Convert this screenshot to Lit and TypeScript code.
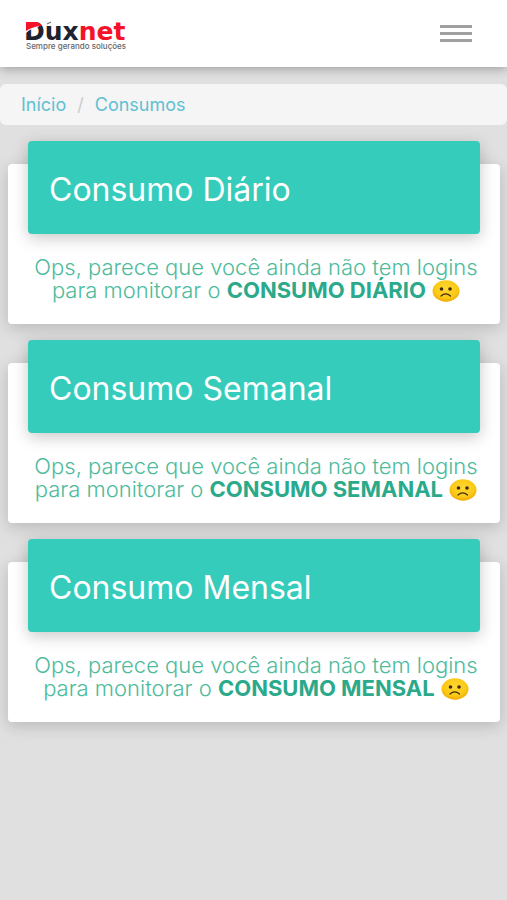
import { LitElement, html, css, svg } from "lit";
import { customElement, property } from "lit/decorators.js";

const sadFace = svg`
  <radialGradient id="face" cx="50%" cy="40%" r="60%">
    <stop offset="0" stop-color="#fdd835" />
    <stop offset="0.7" stop-color="#fbc915" />
    <stop offset="1" stop-color="#f0a800" />
  </radialGradient>
  <ellipse cx="14" cy="11" rx="13.500" ry="10.700" fill="url(#face)" />
  <ellipse cx="9.500" cy="9" rx="1.800" ry="1.700" fill="#422b0d" />
  <ellipse cx="18" cy="9" rx="1.800" ry="1.700" fill="#422b0d" />
  <path d="M9 16 Q13.700 11.800 18.500 16" fill="none" stroke="#422b0d" stroke-width="1.200" stroke-linecap="round" />`;

@customElement("usage-card")
export class UsageCard extends LitElement {
  @property() period = "";

  static styles = css`
    :host { display: block; }
    .card { position: relative; z-index: 0; padding: 0 20px; }
    .card::before {
      content: "";
      position: absolute;
      z-index: -1;
      inset: 23px 0 0;
      background: #fff;
      border-radius: 4px;
      box-shadow: 0 4px 16px rgba(0, 0, 0, 0.18);
    }
    .title {
      margin: 0;
      padding: 30px 21px 26px;
      border-radius: 4px;
      background: #36ccbb;
      color: #fff;
      box-shadow: 0 4px 16px rgba(0, 0, 0, 0.22);
      font: 400 32px/37px Inter, Roboto, sans-serif;
    }
    .message {
      margin: 0 -8px 0 -4px;
      padding: 22px 0;
      color: #4dbb9c;
      font: 300 22px/23px Inter, Roboto, sans-serif;
      text-align: center;
    }
    strong { color: #2baa8b; font-weight: 700; text-transform: uppercase; }
    .face { width: 28px; height: 22px; vertical-align: -4px; }
  `;

  render() {
    return html`<section class="card">
      <h2 class="title">Consumo ${this.period}</h2>
      <p class="message">
        Ops, parece que você ainda não tem logins para monitorar o
        <strong>Consumo ${this.period}</strong>
        <svg class="face" viewBox="0 0 28 22" role="img" aria-label="triste">${sadFace}</svg>
      </p>
    </section>`;
  }
}

@customElement("app-root")
export class AppRoot extends LitElement {
  static styles = css`
    :host {
      display: block;
      min-height: 100vh;
      background: #e0e0e0;
      font-family: Inter, Roboto, sans-serif;
    }
    .bar {
      display: flex;
      align-items: center;
      justify-content: space-between;
      height: 67px;
      padding: 0 35px 0 24px;
      background: #fff;
      box-shadow: 0 2px 10px rgba(0, 0, 0, 0.3);
    }
    .logo { display: block; width: 104px; height: 32px; overflow: visible; }
    .name { font: 700 25px "DejaVu Sans", sans-serif; }
    .tag { font: 500 8px Inter, sans-serif; }
    .menu {
      display: grid;
      gap: 4px;
      padding: 0;
      border: 0;
      background: none;
      cursor: pointer;
    }
    .line { width: 32px; height: 3px; background: #a0a0a0; }
    .crumbs {
      display: flex;
      margin: 17px 0 16px;
      padding: 8px 21px;
      border-radius: 6px;
      background: #f5f5f5;
      font-size: 18px;
      line-height: 25px;
      list-style: none;
    }
    .crumbs li + li::before { content: "/"; padding: 0 11px; color: #ccc; }
    .crumbs a { color: #5fc0d3; text-decoration: none; }
    .cards { display: grid; gap: 16px; padding: 0 7px 24px 8px; }
  `;

  render() {
    return html`
      <header class="bar">
        <a href="#" aria-label="Duxnet">
          <svg class="logo" viewBox="0 0 104 32">
            <text class="name" x="0" y="22" fill="#20222e">Dux<tspan fill="#f5122a">net</tspan></text>
            <path d="M0 2h12l3 7q-4 0-7 2q-3 1-6 4h-2z" fill="#fff" />
            <path d="M2 4h10q4 0 6 4q-6 0-10 2q-3 1-6 3z" fill="#f5122a" />
            <path d="M23 6l4-2" stroke="#555" />
            <text class="tag" x="2" y="31" fill="#666">Sempre gerando soluções</text>
          </svg>
        </a>
        <button class="menu" aria-label="Menu">
          <span class="line"></span><span class="line"></span><span class="line"></span>
        </button>
      </header>
      <nav aria-label="Navegação">
        <ol class="crumbs">
          <li><a href="#">Início</a></li>
          <li><a href="#">Consumos</a></li>
        </ol>
      </nav>
      <main class="cards">
        ${["Diário", "Semanal", "Mensal"].map((p) => html`<usage-card .period=${p}></usage-card>`)}
      </main>
    `;
  }
}
